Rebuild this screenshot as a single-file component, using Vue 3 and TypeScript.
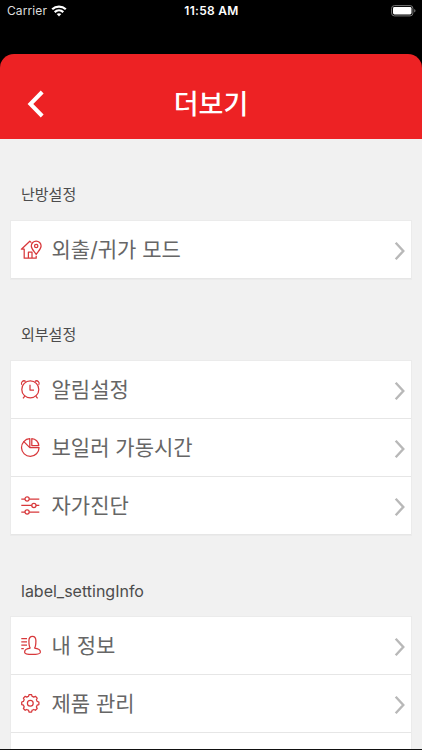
<script setup lang="ts">
type IconName = 'home' | 'alarm' | 'pie' | 'sliders' | 'person' | 'gear'
interface Item { label: string; icon: IconName }
interface Section { title: string; latin?: boolean; items: Item[] }

const sections: Section[] = [
  { title: '난방설정', items: [{ label: '외출/귀가 모드', icon: 'home' }] },
  {
    title: '외부설정',
    items: [
      { label: '알림설정', icon: 'alarm' },
      { label: '보일러 가동시간', icon: 'pie' },
      { label: '자가진단', icon: 'sliders' },
    ],
  },
  {
    title: 'label_settingInfo',
    latin: true,
    items: [
      { label: '내 정보', icon: 'person' },
      { label: '제품 관리', icon: 'gear' },
    ],
  },
]
</script>

<template>
  <div class="screen">
    <div class="status">
      <div class="carrier">
        <span>Carrier</span>
        <svg width="16" height="12" viewBox="0 0 16 12" fill="none" stroke="#fff" stroke-width="2.2">
          <path d="M1.2 4.3C5 .6 11 .6 14.8 4.3" />
          <path d="M3.7 7.1C6.2 4.8 9.8 4.8 12.3 7.1" />
          <path d="M8 11.4 5.7 9.1Q8 7.3 10.3 9.1Z" fill="#fff" stroke="none" />
        </svg>
      </div>
      <span class="clock">11:58 AM</span>
      <svg class="battery" width="25" height="12" viewBox="0 0 25 12">
        <rect x=".6" y=".6" width="21.3" height="10.3" rx="2.8" fill="none" stroke="#777" />
        <rect x="2" y="2" width="18.5" height="7.5" rx="1.4" fill="#fff" />
        <path d="M23.2 4v3.6q1.3-.6 1.3-1.8T23.2 4Z" fill="#777" />
      </svg>
    </div>

    <header class="header">
      <svg class="back" width="18" height="28" viewBox="0 0 18 28" fill="none" stroke="#fff" stroke-width="4">
        <path d="M16.2 2 4.4 14 16.2 26" />
      </svg>
      <h1>더보기</h1>
    </header>

    <main class="content">
      <section v-for="s in sections" :key="s.title">
        <h2 :class="{ latin: s.latin }">{{ s.title }}</h2>
        <ul class="card">
          <li v-for="item in s.items" :key="item.label" class="row">
            <svg class="icon" width="24" height="24" viewBox="0 0 24 24">
              <g v-if="item.icon === 'home'">
                <path d="M12.4 4.6 10.8 3.2 2.4 11.2H5.2V20.2H17.2V17.8M9.4 20.2V14H13V20.2" />
                <path d="M17.2 16.4C15.2 13.4 12.3 11 12.3 8a4.9 4.9 0 0 1 9.8 0C22.1 11 19.2 13.4 17.2 16.4Z" />
                <circle cx="17.2" cy="8" r="1.7" />
              </g>
              <g v-else-if="item.icon === 'alarm'">
                <circle cx="11.3" cy="11.4" r="8.5" />
                <path d="M2.9 7C1.2 4.6 4.1 1.5 6.7 3.4M15.9 3.4C18.5 1.5 21.4 4.6 19.7 7M5.8 18 4 20.4M16.8 18 18.6 20.4" />
                <path d="M11 6.8V12H15" />
              </g>
              <g v-else-if="item.icon === 'pie'">
                <path d="M10.8 2.7A8.8 8.8 0 1 0 20.1 11.6H10.8Z" />
                <path d="M10.8 11.6 4.6 5.4M12.8 2.6V9.6H19.8C19.6 5.8 16.6 2.8 12.8 2.6Z" />
              </g>
              <g v-else-if="item.icon === 'sliders'">
                <path d="M2.3 5H6M10.2 5H20.3M2.3 11.4H12.8M17 11.4H20.3M2.3 18H6M10.2 18H20.3" />
                <circle cx="8.1" cy="5" r="2.1" />
                <circle cx="14.9" cy="11.4" r="2.1" />
                <circle cx="8.1" cy="18" r="2.1" />
              </g>
              <g v-else-if="item.icon === 'person'">
                <path d="M11.5 14.2C9.9 13.2 9.9 10 9.9 6.8 9.9 4 11.3 2.3 13.4 2.3S16.9 4 16.9 6.8C16.9 10 16.9 13.2 15.3 14.2M11.5 14.2C8 14.5 5.6 16 5.6 18.2c0 3 15.8 3 15.8 0 0-2.2-2.6-3.7-6.1-4" />
                <path d="M2.3 4.6H8M2.3 7.8H8M2.3 11.2H8M2.3 14.6H4.8" />
              </g>
              <g v-else>
                <path d="M9.5 4.4 10 2.7H12.6L13.1 4.4Q13.9 4.6 14.8 5.1L16.4 4.3 18.2 6.1 17.4 7.7Q17.9 8.6 18.1 9.4L19.9 10V12.6L18.1 13.2Q17.9 14 17.4 14.9L18.2 16.5 16.4 18.3 14.8 17.5Q13.9 18 13.1 18.2L12.6 20H10L9.5 18.2Q8.7 18 7.8 17.5L6.2 18.3 4.4 16.5 5.2 14.9Q4.7 14 4.5 13.2L2.7 12.6V10L4.5 9.4Q4.7 8.6 5.2 7.7L4.4 6.1 6.2 4.3 7.8 5.1Q8.7 4.6 9.5 4.4Z" />
                <circle cx="11.3" cy="11.3" r="2.9" />
              </g>
            </svg>
            <span class="label">{{ item.label }}</span>
            <svg class="chevron" width="12" height="20" viewBox="0 0 12 20" fill="none" stroke="#b8b8b8" stroke-width="2.4">
              <path d="M1.7 1.7 9.3 10 1.7 18.3" />
            </svg>
          </li>
          <li v-if="s.latin" class="row"></li>
        </ul>
      </section>
    </main>
  </div>
</template>

<style>
body { background: #000; overflow: hidden; }
</style>

<style scoped>
.screen {
  width: 422px;
  height: 750px;
  overflow: hidden;
  display: flex;
  flex-direction: column;
  background: #000;
  font-family: Inter, "Noto Sans CJK KR", sans-serif;
  border-bottom: 1px solid #111;
  box-sizing: border-box;
}
.status {
  flex: none;
  height: 54px;
  box-sizing: border-box;
  padding: 3px 6px 0 7px;
  display: grid;
  grid-template-columns: 1fr auto 1fr;
  align-items: start;
  color: #fff;
  font-size: 12.5px;
  line-height: 16px;
}
.carrier { display: flex; align-items: center; gap: 4px; color: #ddd; font-size: 12px; letter-spacing: .1px; }
.carrier svg { margin-top: -1px; }
.clock { font-weight: 600; font-size: 12px; letter-spacing: .3px; }
.battery { justify-self: end; margin-top: 2px; }
.header {
  flex: none;
  height: 85px;
  box-sizing: border-box;
  padding: 14px 26px 0;
  background: #ed2224;
  border-radius: 14px 14px 0 0;
  display: grid;
  grid-template-columns: 18px 1fr 18px;
  align-items: center;
}
h1 {
  margin: 2px 0 0;
  color: #fff;
  font-size: 27px;
  line-height: 40px;
  font-weight: 500;
  text-align: center;
}
.content { flex: 1; min-height: 0; overflow: hidden; background: #f1f1f1; }
h2 {
  margin: 0;
  height: 82px;
  box-sizing: border-box;
  padding: 44px 21px 0;
  font-size: 15px;
  line-height: 24px;
  font-weight: 400;
  color: #4c4c4c;
}
.latin { font-size: 16px; }
.card {
  list-style: none;
  margin: 0 11px;
  padding: 0;
  background: #fff;
  box-shadow: 0 0 0 1px #ebebeb;
}
.row {
  height: 58px;
  box-sizing: border-box;
  border-bottom: 1px solid #e6e6e6;
  display: flex;
  align-items: center;
  padding: 0 5px 0 8px;
}
.icon { flex: none; fill: none; stroke: #d8383b; stroke-width: 1.25; stroke-linejoin: round; }
.label { flex: 1; margin-left: 8.5px; font-size: 21px; line-height: 30px; color: #666; }
.chevron { flex: none; margin-top: 2px; }
</style>
